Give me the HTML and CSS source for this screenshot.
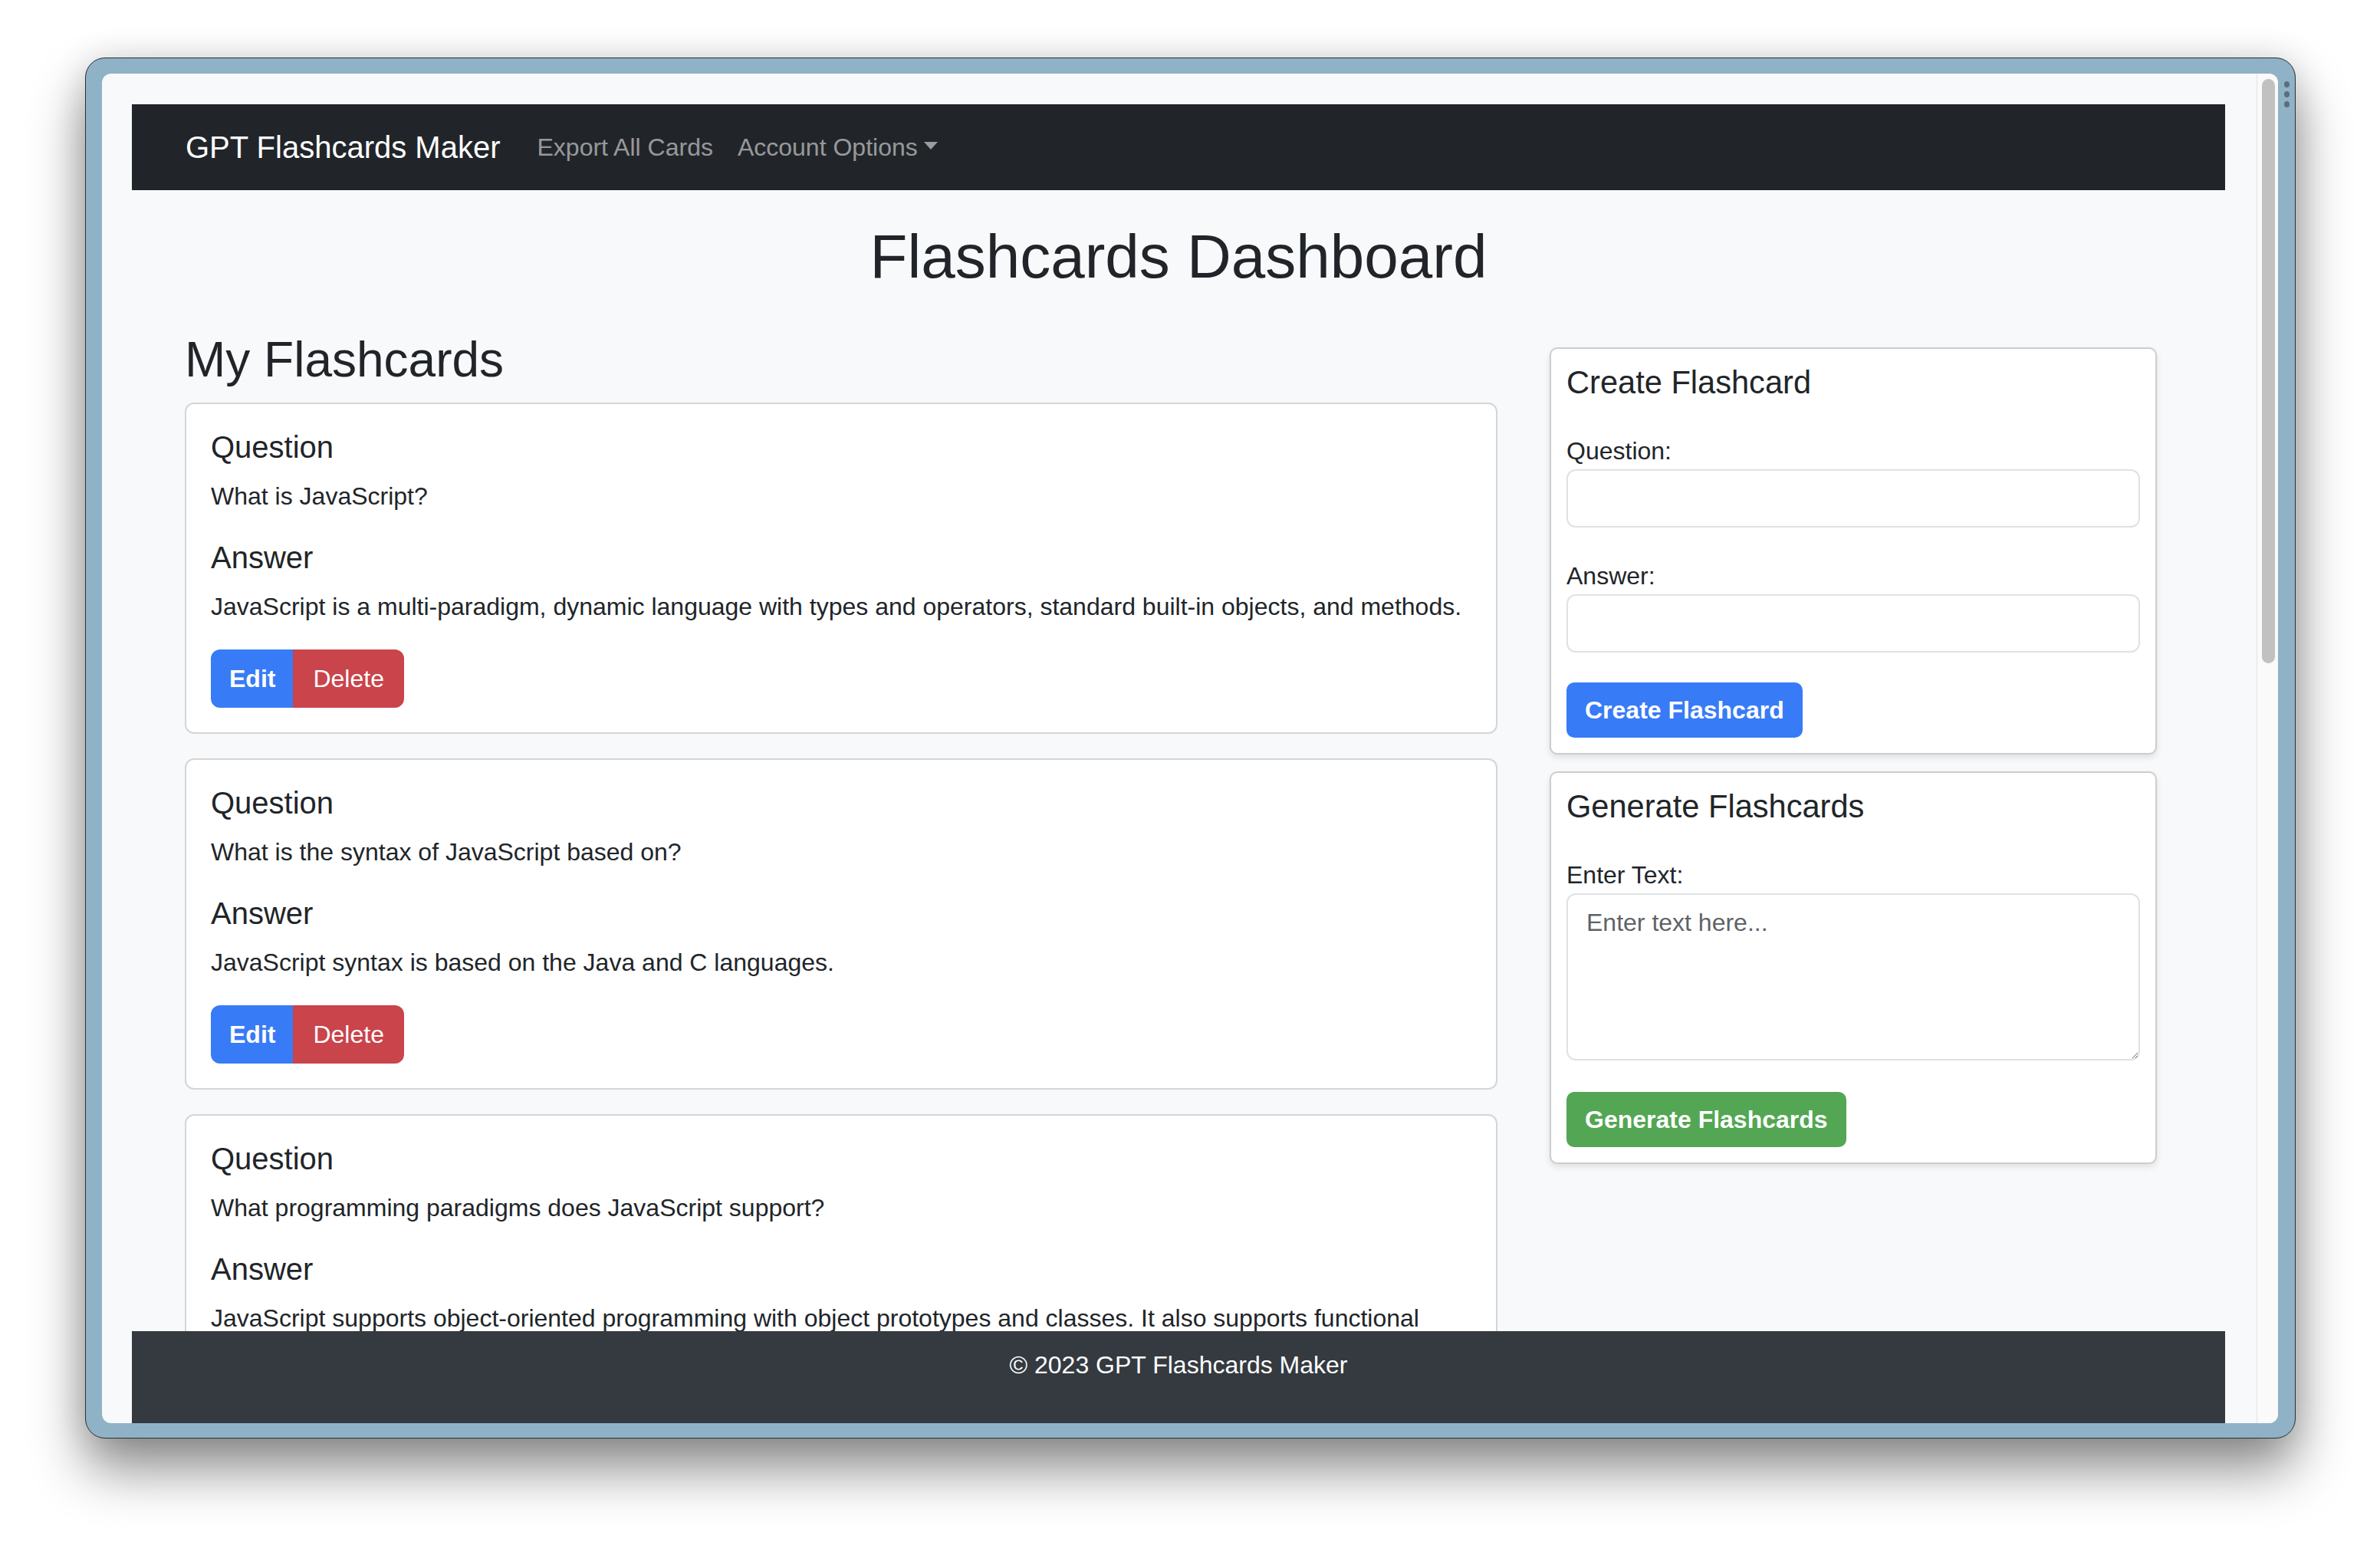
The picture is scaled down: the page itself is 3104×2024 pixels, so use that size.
FILE: index.html
```html
<!DOCTYPE html>
<html lang="en">
<head>
<meta charset="utf-8">
<title>GPT Flashcards Maker</title>
<link rel="stylesheet" href="styles.css">
</head>
<body>
<div class="window">
  <div class="viewport">
    <div class="page">
      <div class="page-scroll">
        <nav class="navbar">
          <a class="brand" href="#">GPT Flashcards Maker</a>
          <a class="nav-link" href="#">Export All Cards</a>
          <a class="nav-link dropdown-toggle" href="#">Account Options</a>
        </nav>

        <h1 class="page-title">Flashcards Dashboard</h1>

        <div class="row">
          <section class="col-main">
            <h2 class="section-title">My Flashcards</h2>

            <div class="card">
              <h5 class="card-label">Question</h5>
              <p class="card-text">What is JavaScript?</p>
              <h5 class="card-label">Answer</h5>
              <p class="card-text">JavaScript is a multi-paradigm, dynamic language with types and operators, standard built-in objects, and methods.</p>
              <div class="btn-group">
                <button class="btn btn-edit">Edit</button><button class="btn btn-delete">Delete</button>
              </div>
            </div>

            <div class="card">
              <h5 class="card-label">Question</h5>
              <p class="card-text">What is the syntax of JavaScript based on?</p>
              <h5 class="card-label">Answer</h5>
              <p class="card-text">JavaScript syntax is based on the Java and C languages.</p>
              <div class="btn-group">
                <button class="btn btn-edit">Edit</button><button class="btn btn-delete">Delete</button>
              </div>
            </div>

            <div class="card">
              <h5 class="card-label">Question</h5>
              <p class="card-text">What programming paradigms does JavaScript support?</p>
              <h5 class="card-label">Answer</h5>
              <p class="card-text">JavaScript supports object-oriented programming with object prototypes and classes. It also supports functional</p>
            </div>
          </section>

          <aside class="col-side">
            <div class="side-card">
              <h5 class="side-title">Create Flashcard</h5>
              <label class="field-label" for="q">Question:</label>
              <input class="field-input" id="q" type="text">
              <label class="field-label" for="a">Answer:</label>
              <input class="field-input" id="a" type="text">
              <button class="btn-solid btn-create">Create Flashcard</button>
            </div>

            <div class="side-card">
              <h5 class="side-title">Generate Flashcards</h5>
              <label class="field-label" for="t">Enter Text:</label>
              <textarea class="field-input field-area" id="t" placeholder="Enter text here..."></textarea>
              <button class="btn-solid btn-generate">Generate Flashcards</button>
            </div>
          </aside>
        </div>
      </div>
      <footer class="footer">© 2023 GPT Flashcards Maker</footer>
    </div>
    <div class="scrollbar"><div class="thumb"></div></div>
  </div>
  <div class="rail">
    <span class="dot"></span>
    <span class="dot"></span>
    <span class="dot"></span>
  </div>
</div>
</body>
</html>
```

FILE: styles.css
```css
html, body {
  margin: 0;
  padding: 0;
}

body {
  width: 3104px;
  height: 2024px;
  overflow: hidden;
  background: #ffffff;
  font-family: "Liberation Sans", Arial, Helvetica, sans-serif;
  color: #212529;
}

/* ---------- window chrome ---------- */
.window {
  margin: 75px 0 0 111px;
  width: 2883px;
  height: 1801px;
  box-sizing: border-box;
  display: flex;
  padding: 20px 0 19px 21px;
  background: #8fb2c6;
  border: 1px solid #2b2f33;
  border-radius: 26px;
  box-shadow: 0 40px 70px rgba(0, 0, 0, 0.45), 0 0 44px rgba(0, 0, 0, 0.12);
}

.viewport {
  width: 2838px;
  height: 1760px;
  flex: none;
  display: flex;
  overflow: hidden;
  border-radius: 12px;
  background: #f8f9fa;
}

.rail {
  width: 22px;
  flex: none;
  display: flex;
  flex-direction: column;
  align-items: center;
  gap: 5px;
  padding-top: 10px;
}

.dot {
  width: 7px;
  height: 8px;
  border-radius: 50%;
  background: #5a6e7b;
}

.scrollbar {
  width: 28px;
  flex: none;
  box-sizing: border-box;
  padding: 7px 0 0 6px;
  background: #fafafa;
  border-left: 1px solid #e3e3e3;
}

.thumb {
  width: 17px;
  height: 762px;
  border-radius: 9px;
  background: #c1c1c1;
}

/* ---------- page ---------- */
.page {
  flex: 1;
  min-width: 0;
  display: flex;
  flex-direction: column;
  padding: 0 41px 0 39px;
}

.page-scroll {
  flex: 1;
  min-height: 0;
  overflow: hidden;
  padding-top: 40px;
}

.navbar {
  height: 112px;
  display: flex;
  align-items: center;
  padding-left: 70px;
  background: #212529;
}

.brand {
  color: #ffffff;
  font-size: 40px;
  line-height: 60px;
  margin-right: 32px;
  text-decoration: none;
}

.nav-link {
  color: rgba(255, 255, 255, 0.55);
  font-size: 32px;
  line-height: 48px;
  padding: 0 16px;
  text-decoration: none;
}

.dropdown-toggle::after {
  content: "";
  display: inline-block;
  margin-left: 8px;
  vertical-align: 8px;
  border-top: 10px solid;
  border-left: 9.6px solid transparent;
  border-right: 9.6px solid transparent;
}

.page-title {
  margin: 39px 0 48px;
  font-size: 80px;
  line-height: 96px;
  font-weight: 400;
  text-align: center;
}

.row {
  display: grid;
  grid-template-columns: 1760px 880px;
  align-items: start;
  margin-left: 45px;
}

.col-main,
.col-side {
  padding: 0 24px;
}

.section-title {
  margin: 0 0 17px;
  font-size: 64px;
  line-height: 77px;
  font-weight: 400;
}

/* ---------- flashcards ---------- */
.card {
  background: #ffffff;
  border: 2px solid #d4d5d6;
  border-radius: 12px;
  padding: 32px 30px 32px 32px;
  margin-bottom: 32px;
}

.card-label {
  margin: 0 0 16px;
  font-size: 40px;
  line-height: 48px;
  font-weight: 400;
}

.card-text {
  margin: 0 0 32px;
  font-size: 32px;
  line-height: 48px;
}

.btn-group {
  display: flex;
  width: fit-content;
}

.btn {
  font-family: inherit;
  font-size: 32px;
  line-height: 48px;
  padding: 12px 24px;
  border: 2px solid transparent;
  color: #ffffff;
  cursor: pointer;
}

.btn-edit {
  padding: 12px 21px 12px 22px;
  background: #387bf6;
  border-color: #387bf6;
  font-weight: 700;
  border-radius: 12px 0 0 12px;
}

.btn-delete {
  background: #c9444b;
  border-color: #c9444b;
  font-weight: 400;
  border-radius: 0 12px 12px 0;
}

/* ---------- side forms ---------- */
.side-card {
  margin: 22px 20px 20px;
  background: #ffffff;
  border: 2px solid #cdcdcd;
  border-radius: 10px;
  padding: 20px;
  box-shadow: 0 4px 8px rgba(0, 0, 0, 0.1);
}

.side-title {
  margin: 0 0 41px;
  font-size: 41.6px;
  line-height: 48px;
  font-weight: 400;
}

.field-label {
  display: block;
  font-size: 32px;
  line-height: 48px;
}

.field-input {
  display: block;
  width: 100%;
  height: 76px;
  box-sizing: border-box;
  margin: 0 0 39px;
  padding: 12px 24px;
  font-family: inherit;
  font-size: 32px;
  line-height: 48px;
  color: #212529;
  background: #ffffff;
  border: 2px solid #dee2e6;
  border-radius: 12px;
  outline: none;
}

.field-area {
  height: 218px;
  margin-bottom: 41px;
  resize: vertical;
}

.field-area::placeholder {
  color: #5f6366;
}

.btn-solid {
  display: block;
  font-family: inherit;
  font-size: 32px;
  line-height: 48px;
  font-weight: 700;
  padding: 12px 24px;
  border: 0;
  border-radius: 10px;
  color: #ffffff;
  cursor: pointer;
}

.btn-create {
  background: #387bf6;
}

.btn-generate {
  background: #53a653;
}

/* ---------- footer ---------- */
.footer {
  flex: none;
  height: 120px;
  box-sizing: border-box;
  padding-top: 20px;
  background: #343a40;
  color: #ffffff;
  text-align: center;
  font-size: 32px;
  line-height: 48px;
}
```
